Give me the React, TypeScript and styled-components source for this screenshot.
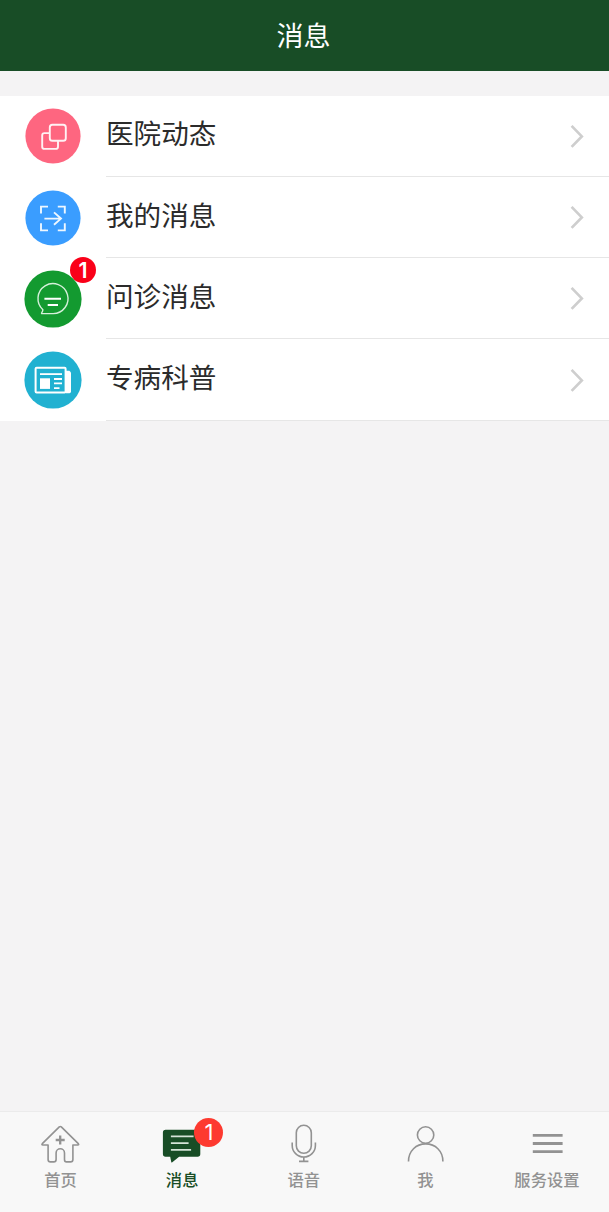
import React from 'react';
import styled, { createGlobalStyle } from 'styled-components';

const GlobalStyle = createGlobalStyle`
  body {
    margin: 0;
    background: #f4f3f4;
    font-family: "Noto Sans CJK SC", sans-serif;
  }
`;

const Screen = styled.div`
  display: flex;
  flex-direction: column;
  height: 100vh;
  min-height: 1212px;
  background: #f4f3f4;
`;

const Header = styled.header`
  display: flex;
  align-items: center;
  justify-content: center;
  height: 71px;
  box-sizing: border-box;
  padding: 0 2px 2px 0;
  background: #184d26;
`;

const Title = styled.h1`
  margin: 0;
  font-size: 27px;
  line-height: 40px;
  font-weight: 400;
  color: #fff;
`;

const List = styled.ul`
  list-style: none;
  margin: 24.6px 0 0;
  padding: 0;
  background: #fff;
`;

const Row = styled.li`
  display: flex;
  align-items: center;
  height: 81.3px;
  padding-left: 24px;
`;

const Avatar = styled.div`
  position: relative;
  width: 58px;
  height: 58px;
  margin-right: 24px;

  svg {
    display: block;
  }
`;

const RowBody = styled.div`
  display: flex;
  flex: 1;
  align-items: center;
  justify-content: space-between;
  height: 100%;
  box-sizing: border-box;
  padding-right: 24px;
  border-bottom: 1.5px solid #e6e6e6;
`;

const RowLabel = styled.span`
  font-size: 27.6px;
  line-height: 40px;
  padding-bottom: 6.8px;
  color: #2b2b2b;
`;

const Badge = styled.span<{ $size: number; $top: number; $left: number; $color: string; $weight: number; $font: number }>`
  position: absolute;
  top: ${(p) => p.$top}px;
  left: ${(p) => p.$left}px;
  width: ${(p) => p.$size}px;
  height: ${(p) => p.$size}px;
  border-radius: 50%;
  background: ${(p) => p.$color};
  color: #fff;
  font-family: Inter, sans-serif;
  font-size: ${(p) => p.$font}px;
  font-weight: ${(p) => p.$weight};
  line-height: ${(p) => p.$size}px;
  text-align: center;
`;

const TabBar = styled.nav`
  display: flex;
  height: 101px;
  box-sizing: border-box;
  margin-top: auto;
  padding-right: 1px;
  background: #f8f8f8;
  border-top: 1px solid #ebebeb;
`;

const Tab = styled.div<{ $active?: boolean }>`
  display: flex;
  flex: 1;
  flex-direction: column;
  align-items: center;
  padding-top: 10px;
  color: ${(p) => (p.$active ? '#184d26' : '#929292')};
`;

const TabIcon = styled.div`
  position: relative;
  width: 44px;
  height: 44px;

  svg {
    display: block;
  }
`;

const TabLabel = styled.span`
  margin-top: 1px;
  padding-right: 0.5px;
  font-size: 16.3px;
  line-height: 24px;
  font-weight: 500;
`;

const Disc = ({ r, color, children }: { r: number; color: string; children: React.ReactNode }) => (
  <svg width="58" height="58" viewBox="-29 -29 58 58" fill="none" stroke="#fff">
    <circle r={r} fill={color} stroke="none" />
    {children}
  </svg>
);

const NewsIcon = () => (
  <Disc r={27.6} color="#fe6680">
    <g strokeWidth="1.9" stroke="#fff2f4" fill="#fe6680">
      <rect x="-10.8" y="-2.9" width="15.8" height="15.8" rx="2.2" />
      <rect x="-3.2" y="-11.2" width="16" height="16" rx="2.6" />
    </g>
  </Disc>
);

const ScanIcon = () => (
  <Disc r={27.6} color="#3a9dff">
    <g strokeWidth="1.9" stroke="#eef7ff">
      <path d="M-12-4.4V-11.4H-5M4.8-11.4H11.8V-4.4M11.8 5.2V12.4H4.8M-5 12.4H-12V5.2" />
      <path d="M-8.6 0.6H8M1-5.6 8 0.6 1 6.8" />
    </g>
  </Disc>
);

const ChatIcon = () => (
  <Disc r={28.6} color="#139a30">
    <path
      d="M-10.1 10.7A15 15 0 1 1 0.2 14.6H-11.4C-12 14-10.2 13-10.1 10.7Z"
      strokeWidth="1.4"
      stroke="#d5f0da"
      strokeLinejoin="round"
    />
    <path d="M-8.6-0.3H8M-5.3 6H5" strokeWidth="1.9" />
  </Disc>
);

const PaperIcon = () => (
  <Disc r={28.6} color="#21b1d1">
    <path d="M13-9.3H16.4L18 -7.4V12.2L16.6 13.3H13Z" fill="#fff" stroke="none" />
    <rect x="-17.4" y="-12.3" width="30" height="24.8" rx="1" strokeWidth="2" />
    <path d="M-13-5.9H9" strokeWidth="1.8" />
    <rect x="-13" y="-1.7" width="10" height="10.6" fill="#fff" stroke="none" />
    <path d="M1-1H9M1 3.4H9M1 8.2H6.5" strokeWidth="1.8" />
  </Disc>
);

const Chevron = () => (
  <svg width="16" height="26" viewBox="0 0 16 26" fill="none" stroke="#cecece" strokeWidth="2.7">
    <path d="M2.6 2.9 12.8 13.4 2.6 23.9" />
  </svg>
);

const TabSvg = ({ children }: { children: React.ReactNode }) => (
  <svg width="44" height="44" viewBox="0 0 44 44" fill="none" stroke="currentColor" strokeWidth="1.6">
    {children}
  </svg>
);

const HomeIcon = () => (
  <TabSvg>
    <path
      d="M20.3 4.9Q21.3 4.1 22.3 4.9L39.3 21.6Q40.3 23 38.7 23H33.9V37.5Q33.9 39.9 31.5 39.9H27.5Q25.5 39.9 25.5 37.5V31A4.2 4.2 0 0 0 17.1 31V37.5Q17.1 39.9 14.7 39.9H11.5Q9.1 39.9 9.1 37.5V23H3.9Q2.3 23 3.3 21.6Z"
      strokeLinejoin="round"
    />
    <path d="M21.2 13.5V22.5M16.7 18H25.7" strokeWidth="2.3" />
  </TabSvg>
);

const MessageIcon = () => (
  <TabSvg>
    <path
      d="M5.6 7.7H37.6Q40.3 7.7 40.3 10.4V32Q40.3 34.7 37.6 34.7H19.1L12 40.4Q11.2 40.8 11.2 39.8L10.2 34.7H5.6Q2.9 34.7 2.9 32V10.4Q2.9 7.7 5.6 7.7Z"
      fill="currentColor"
      stroke="none"
    />
    <path d="M10.9 14.3H33.6M10.9 21.2H28.6M10.9 27.8H31.1" stroke="#d5e4d8" strokeWidth="1.8" />
  </TabSvg>
);

const MicIcon = () => (
  <TabSvg>
    <rect x="14.3" y="3.3" width="15" height="28" rx="7.5" />
    <path d="M10.2 20.4V23.4A11.6 11.6 0 0 0 33.4 23.4V20.4M21.8 35V39.4M17 39.4H26.4" />
  </TabSvg>
);

const PersonIcon = () => (
  <TabSvg>
    <circle cx="21.6" cy="13" r="8.2" />
    <path d="M4.5 39.4C4.5 29 12.1 21.9 21.7 21.9S38.9 29 38.9 39.4" />
  </TabSvg>
);

const MenuIcon = () => (
  <TabSvg>
    <path d="M7.8 13.4H37.6M7.8 21.5H37.6M7.8 29.6H37.6" strokeWidth="2.9" />
  </TabSvg>
);

const rows = [
  { label: '医院动态', Icon: NewsIcon },
  { label: '我的消息', Icon: ScanIcon },
  { label: '问诊消息', Icon: ChatIcon, badge: 1 },
  { label: '专病科普', Icon: PaperIcon },
];

const tabs = [
  { label: '首页', Icon: HomeIcon },
  { label: '消息', Icon: MessageIcon, badge: 1, active: true },
  { label: '语音', Icon: MicIcon },
  { label: '我', Icon: PersonIcon },
  { label: '服务设置', Icon: MenuIcon },
];

export default function App() {
  return (
    <>
      <GlobalStyle />
      <Screen>
        <Header>
          <Title>消息</Title>
        </Header>
        <List>
          {rows.map(({ label, Icon, badge }) => (
            <Row key={label}>
              <Avatar>
                <Icon />
                {badge && (
                  <Badge $size={26} $top={-12.6} $left={46} $color="#fa0019" $weight={600} $font={21.5}>
                    {badge}
                  </Badge>
                )}
              </Avatar>
              <RowBody>
                <RowLabel>{label}</RowLabel>
                <Chevron />
              </RowBody>
            </Row>
          ))}
        </List>
        <TabBar>
          {tabs.map(({ label, Icon, badge, active }) => (
            <Tab key={label} $active={active}>
              <TabIcon>
                <Icon />
                {badge && (
                  <Badge $size={29} $top={-4.5} $left={34} $color="#fd3a30" $weight={400} $font={22}>
                    {badge}
                  </Badge>
                )}
              </TabIcon>
              <TabLabel>{label}</TabLabel>
            </Tab>
          ))}
        </TabBar>
      </Screen>
    </>
  );
}
